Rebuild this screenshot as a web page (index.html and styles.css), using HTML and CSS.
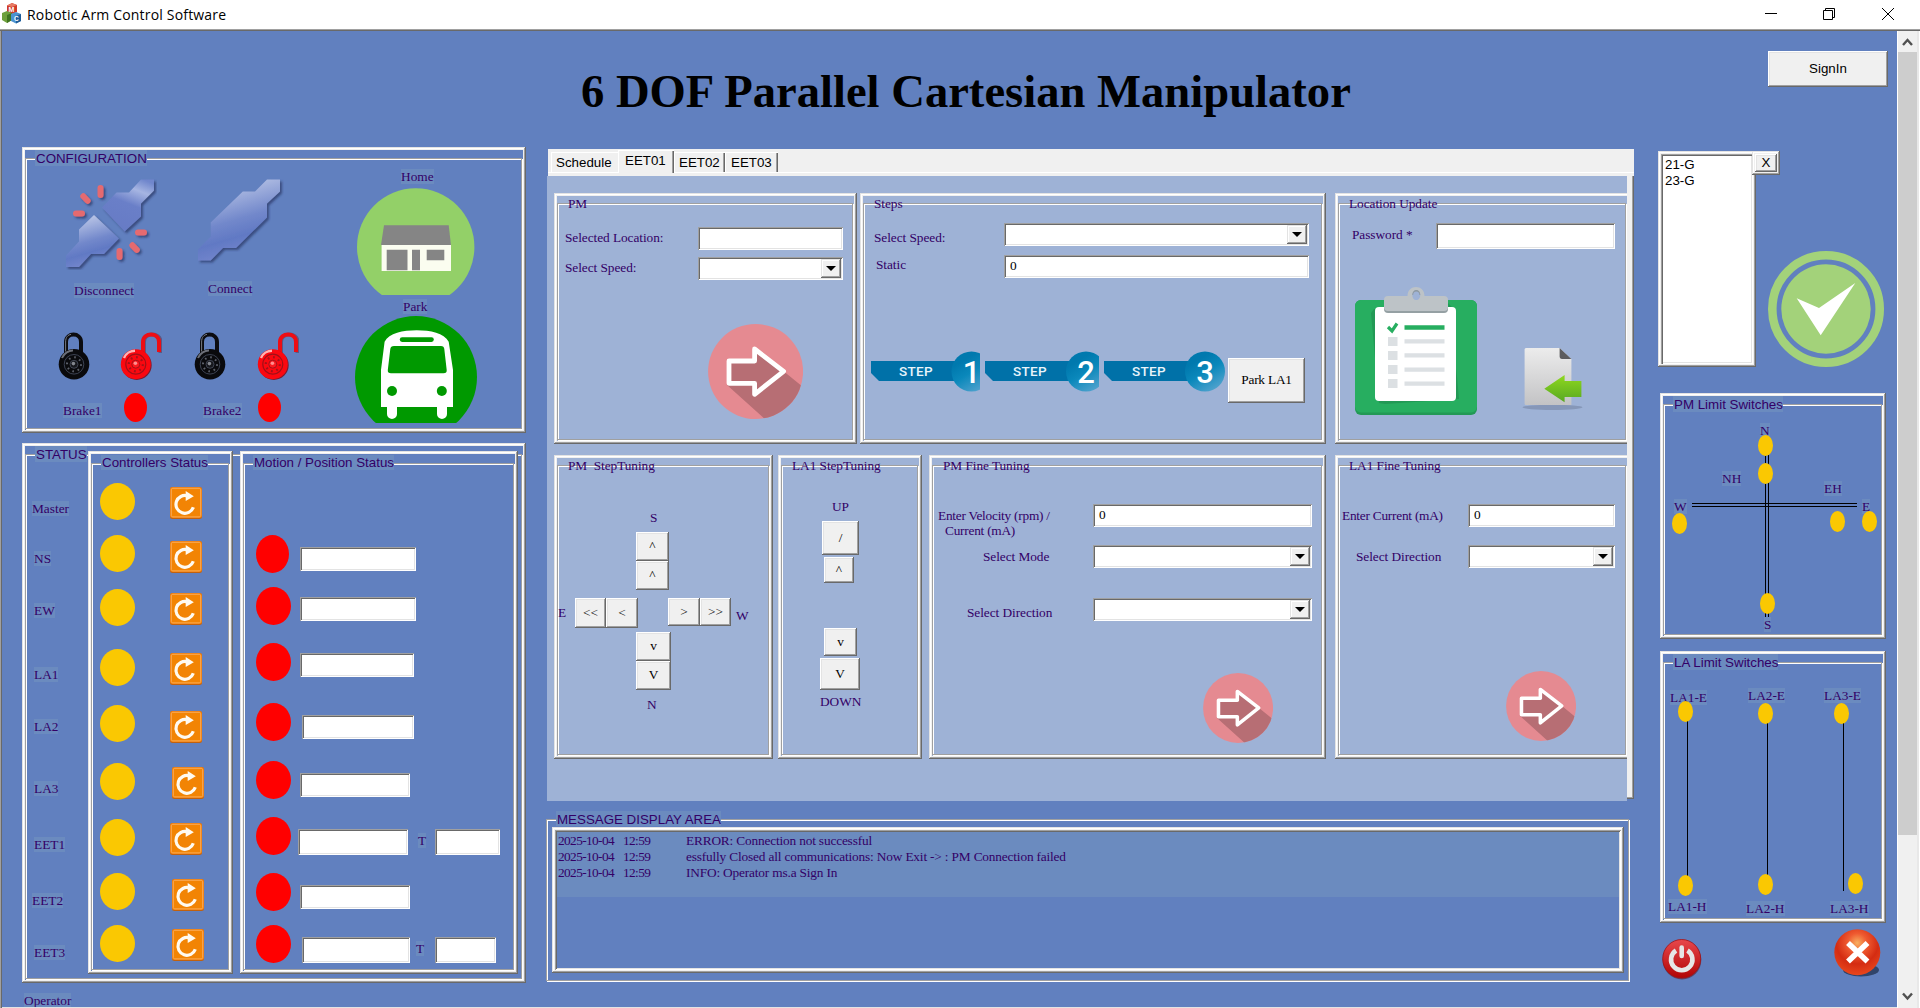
FILE: index.html
```html
<!DOCTYPE html>
<html lang="en">
<head>
<meta charset="utf-8">
<title>Robotic Arm Control Software</title>
<link rel="stylesheet" href="styles.css">
</head>
<body>
<svg class="defs" width="0" height="0">
  <defs>
    <linearGradient id="plug" x1="0.3" y1="0" x2="0.6" y2="1">
      <stop offset="0" stop-color="#c3cdea"/><stop offset="0.5" stop-color="#7288cb"/><stop offset="0.7" stop-color="#6179c4"/><stop offset="1" stop-color="#7b8bd0"/>
    </linearGradient>
    <linearGradient id="plugTop" x1="0.8" y1="0" x2="0.4" y2="1">
      <stop offset="0" stop-color="#6f86cc"/><stop offset="0.22" stop-color="#a6b5e2"/><stop offset="0.5" stop-color="#6a7fc8"/><stop offset="1" stop-color="#667bc5"/>
    </linearGradient>
    <linearGradient id="stepBlue" x1="0" y1="0" x2="0.6" y2="1">
      <stop offset="0.3" stop-color="#0079ae"/><stop offset="0.6" stop-color="#0a88bb"/><stop offset="1" stop-color="#4aa0cc"/>
    </linearGradient>
    <linearGradient id="sheet" x1="0" y1="0" x2="0" y2="1">
      <stop offset="0" stop-color="#ececec"/><stop offset="1" stop-color="#c3c3c5"/>
    </linearGradient>
    <linearGradient id="leaf" x1="0" y1="0" x2="0" y2="1">
      <stop offset="0" stop-color="#8fd81e"/><stop offset="1" stop-color="#58a822"/>
    </linearGradient>
    <linearGradient id="powerRed" x1="0" y1="0" x2="0" y2="1">
      <stop offset="0" stop-color="#e8484c"/><stop offset="1" stop-color="#b10405"/>
    </linearGradient>
    <radialGradient id="closeRed" cx="0.5" cy="0.3" r="0.7">
      <stop offset="0" stop-color="#f8b060"/><stop offset="0.3" stop-color="#ef5a30"/><stop offset="0.65" stop-color="#d42c12"/><stop offset="1" stop-color="#e8461c"/>
    </radialGradient>
    <filter id="soft" x="-20%" y="-20%" width="150%" height="150%">
      <feDropShadow dx="2" dy="2" stdDeviation="1.2" flood-color="#20305f" flood-opacity="0.65"/>
    </filter>
    <clipPath id="disc"><circle cx="47.6" cy="47.5" r="47.5"/></clipPath>
    <symbol id="go" viewBox="0 0 95 95">
      <circle cx="47.6" cy="47.5" r="47.5" fill="#e58a91"/>
      <g clip-path="url(#disc)">
        <path fill="#b76e74" d="M21 37H46.6V25L75.6 47.3 100 67 70 107 19 61Z"/>
      </g>
      <path fill="#e58a91" d="M44 27 46.600 25 46.600 37 21 37 21 35H44Z"/>
      <path fill="none" stroke="#fff" stroke-width="4.8" stroke-linejoin="round" d="M21 37H46.6V25L75.6 47.3 46.6 70.3V59.3H21Z"/>
    </symbol>
    <symbol id="reset" viewBox="0 0 32 32">
      <rect x="0" y="0" width="32" height="32" rx="2.5" fill="#c1610e"/>
      <rect x="0" y="0" width="32" height="31" rx="2.5" fill="#ee7f10"/>
      <rect x="1.3" y="1.3" width="29.4" height="28.6" rx="1.5" fill="#f28404" stroke="#fbab56" stroke-width="1"/>
      <path fill="none" stroke="#fffaf0" stroke-width="3.2" d="M17.6 8.9A8.9 8.9 0 1 0 23.3 20.3"/>
      <path fill="#fffaf0" d="M15.7 4 23.8 9.2 15.7 14Z"/>
    </symbol>
    <symbol id="lock" viewBox="0 0 32 48">
      <path fill="none" stroke="#0c0c10" stroke-width="4" d="M8 24V10C8 0 23 0 23 10V24"/>
      <path fill="none" stroke="#777b85" stroke-width="1" d="M7.6 20V10C7.6 5 10 3 13 2.3"/>
      <circle cx="16" cy="32.3" r="15.3" fill="#0a0a0d"/>
      <path fill="none" stroke="#6c6f78" stroke-width="2" d="M4 26C6 21 11 18.5 15 18.6"/>
      <circle cx="16" cy="32.3" r="9.8" fill="none" stroke="#3c4252" stroke-width="1"/>
      <circle cx="16" cy="32.3" r="7" fill="none" stroke="#5e626c" stroke-width="2" stroke-dasharray="1.6 3.9"/>
      <circle cx="16" cy="32.3" r="4" fill="#17181d" stroke="#3f4452"/><circle cx="15.4" cy="31.6" r="1.8" fill="#858890"/>
    </symbol>
    <symbol id="unlock" viewBox="0 0 42 48">
      <path fill="none" stroke="#58304a" stroke-opacity=".5" stroke-width="4" d="M24 23V10C24 0 40.5 0 40.5 10V21"/>
      <path fill="none" stroke="#ee0d14" stroke-width="4" d="M23 22V10C23 0 39 0 39 10V20"/>
      <circle cx="16.7" cy="33" r="15" fill="#7a1c30"/>
      <circle cx="15.8" cy="32.2" r="15" fill="#fb0810"/>
      <path fill="none" stroke="#ffb3b3" stroke-width="2.4" d="M4 26C6 21 11 18.8 15 18.8"/>
      <circle cx="15.8" cy="32.2" r="10" fill="none" stroke="#a01018" stroke-width="1.2"/>
      <circle cx="15.8" cy="32.2" r="7" fill="none" stroke="#a31218" stroke-width="2.2" stroke-dasharray="1.8 3.7"/>
      <circle cx="15.8" cy="32.2" r="4" fill="#fb1a20" stroke="#a31218"/><circle cx="15.4" cy="31.2" r="1.8" fill="#ff8f90"/>
    </symbol>
  </defs>
</svg>

<div class="window">
  <header class="titlebar">
    <svg class="app-icon" width="19" height="21" viewBox="0 0 19 21">
      <path fill="#cf3a28" d="M5 2.5 10 0l5 2v7l-5 2-5-2Z"/><path fill="#e87b64" d="M5 2.5 10 .3l5 1.8-5 2Z"/>
      <path fill="#6ea03c" d="M0 10 5 8l5 2v7l-5 3-5-3Z"/><path fill="#3f7420" d="M5 12l5-2v7l-5 3Z"/>
      <path fill="#4b92cf" d="M9 11l5-2 5 2v7l-5 2.500-5-2.500Z"/><path fill="#1e5c98" d="M14 13l5-2v7l-5 2.500Z"/>
      <text x="6.500" y="8.500" font-size="7" font-weight="700" fill="#fff" font-family="Liberation Sans, sans-serif">M</text>
      <text x="12" y="18" font-size="6.500" font-weight="700" fill="#fff" font-family="Liberation Sans, sans-serif">C</text>
    </svg>
    <span class="app-name">Robotic Arm Control Software</span>
    <svg class="caption" width="132" height="16" viewBox="0 0 132 16" fill="none" stroke="#000" stroke-width="1">
      <path d="M0 6.500H12"/><path d="M58.500 3.500H67.500V12.500H58.500ZM60.500 3V1.500H69.500V10.500H68"/><path d="M117 1 129 13M129 1 117 13"/>
    </svg>
  </header>

  <div class="client">
    <main class="canvas">
      <div class="head">
        <h1>6 DOF Parallel Cartesian Manipulator</h1>
        <button class="btn signin">SignIn</button>
      </div>

      <div class="columns">
        <section class="col-left">
          <div class="frame config"><div class="group">
            <span class="legend">CONFIGURATION</span>
            <div class="config-body">
              <div class="devices">
                <div class="links">
                  <div class="link-off">
                    <svg width="92" height="92" viewBox="0 0 92 92">
                      <g filter="url(#soft)">
                        <path fill="url(#plugTop)" d="M76 1.500H89V12.500L76 25.500V38.500L59.600 53.500 37 29.500 51.500 14.500H64Z"/>
                        <path fill="url(#plug)" d="M29 37 54 60.500 39 76H26L14 89H1V77.500L14 63.500V51.500Z"/>
                        <g stroke="#e56a70" stroke-width="6" stroke-linecap="round">
                          <path d="M35.500 10V17M18.300 18.300 22.600 22.800M11 35.500H17M73 54.500H79M67.400 67.300 71.800 71.800M54.500 73V79"/>
                        </g>
                      </g>
                    </svg>
                    <span class="lbl">Disconnect</span>
                  </div>
                  <div class="link-on">
                    <svg width="88" height="87" viewBox="0 0 88 87">
                      <path filter="url(#soft)" fill="url(#plug)" d="M70 1.500H83V13.500L70 25.500V39.500L39 70H26L13.700 82.500H1V71.500L13.700 58.500V44.500L45.800 13.500H58Z"/>
                    </svg>
                    <span class="lbl">Connect</span>
                  </div>
                </div>
                <div class="brakes">
                  <div class="brake">
                    <svg width="32" height="48"><use href="#lock"/></svg><svg width="42" height="48"><use href="#unlock"/></svg>
                    <span class="lbl">Brake1</span><i class="dot"></i>
                  </div>
                  <div class="brake second">
                    <svg width="32" height="48"><use href="#lock"/></svg><svg width="42" height="48"><use href="#unlock"/></svg>
                    <span class="lbl">Brake2</span><i class="dot"></i>
                  </div>
                </div>
              </div>
              <div class="places">
                <span class="lbl home-lbl">Home</span>
                <svg class="home" width="118" height="107" viewBox="0 0 118 107">
                  <circle cx="58.700" cy="59" r="58.700" fill="#93d068"/>
                  <path fill="#858585" d="M27 37.300H91.700L94 57H24Z"/><path fill="#fbfdf0" d="M24.600 57H94V83H24.600Z"/>
                  <path fill="#858585" d="M29.700 61.700H50.500V82.300H29.700ZM55 61.700H63V82.300H55ZM69.700 61.700H87.300V72.300H69.700Z"/>
                </svg>
                <span class="lbl park-lbl">Park</span>
                <svg class="park" width="122" height="107" viewBox="0 0 122 107">
                  <circle cx="61" cy="61" r="61" fill="#009900"/>
                  <path fill="#fff" d="M26 91V54L29.600 25.700C34 17 48 14.300 61.700 14.300S89 17 93.700 25.700L98 54V91H92V98A5 5 0 0 1 82 98V91H42V98A5 5 0 0 1 32 98V91Z"/>
                  <rect x="44.800" y="21.300" width="34" height="4.600" rx="2.300" fill="#009900"/>
                  <path fill="#009900" d="M39 30H86Q89 30 89.300 33L91.700 54Q92 57.300 88.500 57.300H36Q32.500 57.300 32.800 54L35.300 33Q35.600 30 39 30Z"/>
                  <circle cx="37" cy="75" r="5" fill="#009900"/><circle cx="86.800" cy="75" r="5" fill="#009900"/>
                </svg>
              </div>
            </div>
          </div></div>

          <div class="frame status"><div class="group status-group">
            <div class="names">
              <span class="legend">STATUS</span>
              <div class="name-list">
                <span class="lbl out">Master</span><span class="lbl">NS</span><span class="lbl">EW</span><span class="lbl">LA1</span><span class="lbl">LA2</span><span class="lbl">LA3</span><span class="lbl">EET1</span><span class="lbl out">EET2</span><span class="lbl">EET3</span>
              </div>
            </div>
            <div class="frame controllers"><div class="group">
              <span class="legend">Controllers Status</span>
              <div class="ctl-body">
                <div class="lamps"><i></i><i></i><i></i><i></i><i></i><i></i><i></i><i></i><i></i></div>
                <div class="resets">
                  <svg><use href="#reset"/></svg><svg><use href="#reset"/></svg><svg><use href="#reset"/></svg><svg><use href="#reset"/></svg><svg><use href="#reset"/></svg><svg class="in"><use href="#reset"/></svg><svg><use href="#reset"/></svg><svg class="in"><use href="#reset"/></svg><svg class="in"><use href="#reset"/></svg>
                </div>
              </div>
            </div></div>
            <div class="frame motion"><div class="group">
              <span class="legend">Motion / Position Status</span>
              <div class="ctl-body">
                <div class="reds"><i class="slim"></i><i></i><i></i><i></i><i></i><i></i><i></i><i></i></div>
                <div class="readouts">
                  <div><b class="field w116"></b></div>
                  <div><b class="field w116"></b></div>
                  <div><b class="field w114"></b></div>
                  <div><b class="field w112"></b></div>
                  <div><b class="field w110"></b></div>
                  <div class="eet1"><b class="field w110 tall"></b><span class="lbl">T</span><b class="field tall w64"></b></div>
                  <div><b class="field w110"></b></div>
                  <div class="eet3"><b class="field w108 tall"></b><span class="lbl">T</span><b class="field tall w60"></b></div>
                </div>
              </div>
            </div></div>
          </div></div>
          <span class="lbl operator">Operator</span>
        </section>

        <section class="col-mid">
          <div class="tabs">
            <nav class="tabstrip">
              <span class="tab t1">Schedule</span><span class="tab t2 on">EET01</span><span class="tab t3">EET02</span><span class="tab t4">EET03</span>
            </nav>
            <div class="tabwrap">
              <div class="page">
                <div class="prow top">
                  <div class="frame pm"><div class="group">
                    <span class="cap">PM</span>
                    <div class="form">
                      <label>Selected Location:</label><b class="field"></b>
                      <label>Select Speed:</label><b class="field combo"><i></i></b>
                    </div>
                    <svg class="go" width="95" height="95"><use href="#go"/></svg>
                  </div></div>
                  <div class="frame steps"><div class="group">
                    <span class="cap">Steps</span>
                    <div class="form">
                      <label class="l1">Select Speed:</label><b class="field combo"><i></i></b>
                      <label class="l2">Static</label><b class="field">0</b>
                    </div>
                    <div class="badges">
                      <svg width="109" height="41" viewBox="0 0 109 41"><path fill="#0071a8" d="M0 10H90V30H8L0 22Z"/><circle cx="100.500" cy="20.500" r="20" fill="url(#stepBlue)"/><text class="st" x="28" y="25">STEP</text><text class="num" x="100.500" y="32">1</text></svg>
                      <svg width="114" height="41" viewBox="0 0 114 41"><path fill="#0071a8" d="M0 10H90V30H8L0 22Z"/><circle cx="101" cy="20.500" r="20" fill="url(#stepBlue)"/><text class="st" x="28" y="25">STEP</text><text class="num" x="101" y="32">2</text></svg>
                      <svg width="121" height="41" viewBox="0 0 121 41"><path fill="#0071a8" d="M0 10H90V30H8L0 22Z"/><circle cx="101" cy="20.500" r="20" fill="url(#stepBlue)"/><text class="st" x="28" y="25">STEP</text><text class="num" x="101" y="32">3</text></svg>
                      <button class="btn serif park-la">Park LA1</button>
                    </div>
                  </div></div>
                  <div class="frame loc"><div class="group">
                    <span class="cap">Location Update</span>
                    <div class="form"><label>Password *</label><b class="field"></b></div>
                    <div class="docs">
                      <svg width="123" height="128" viewBox="0 0 123 128">
                        <rect y="13" width="122" height="115" rx="6" fill="#229955"/><rect y="13" width="122" height="112.500" rx="6" fill="#27ae60"/>
                        <path fill="#229955" d="M19 22 16 26 24 116 30 117 104 112 102 90 93 16 97 20Z"/>
                        <rect x="20" y="20" width="81" height="94" rx="4" fill="#fff"/>
                        <path fill="#95a0a3" d="M29 12H93V22Q93 26 89 26H33Q29 26 29 22Z"/>
                        <path fill="#bdc3c7" fill-rule="evenodd" d="M33 9H52.500C52.500 -3 69.500 -3 69.500 9H89Q93 9 93 13V20Q93 24 89 24H33Q29 24 29 20V13Q29 9 33 9Z"/>
                        <ellipse cx="61.300" cy="8" rx="4" ry="5" fill="#9eb2d6"/><path d="M57.300 8a4 5 0 0 1 8 0z" fill="#8e989e"/><ellipse cx="61.300" cy="8.800" rx="3.200" ry="4.200" fill="#9eb2d6"/>
                        <path fill="none" stroke="#27ae60" stroke-width="3.200" d="M33 40 37 44 42 36.500"/>
                        <path fill="#27ae60" d="M49.500 38.300H89.500V42.800H49.500Z"/>
                        <path fill="#dce0e3" d="M33 50H42.500V59H33ZM33 64H42.500V73H33ZM33 78H42.500V87H33ZM33 92H42.500V101H33ZM49.500 52.300H89.500V56.500H49.500ZM49.500 66.300H89.500V70.500H49.500ZM49.500 80.500H89.500V84.700H49.500ZM49.500 94.600H89.500V98.800H49.500Z"/>
                      </svg>
                      <svg class="sheet" width="61" height="63" viewBox="0 0 61 63">
                        <ellipse cx="30.500" cy="60.300" rx="30" ry="2.600" fill="#8090b0" opacity=".8"/>
                        <path fill="url(#sheet)" d="M4 1H37.600L49.400 12V58H4Q2.600 58 2.600 56.500V2.500Q2.600 1 4 1Z"/>
                        <path fill="#5c5c5e" d="M37.600 1 49.400 12H40Q37.600 12 37.600 9Z"/>
                        <path fill="url(#leaf)" d="M22.300 41.700 42.600 28V34H59.400V50H42.600V55.300Z"/>
                      </svg>
                    </div>
                  </div></div>
                </div>

                <div class="prow bottom">
                  <div class="frame pmstep"><div class="group">
                    <span class="cap">PM&nbsp; StepTuning</span>
                    <span class="txt s">S</span>
                    <div class="stack up"><button class="btn serif">^</button><button class="btn serif">^</button></div>
                    <div class="mid">
                      <span class="txt e">E</span><button class="btn serif w31">&lt;&lt;</button><button class="btn serif w32">&lt;</button>
                      <button class="btn serif r w32 first">&gt;</button><button class="btn serif r w31">&gt;&gt;</button><span class="txt w">W</span>
                    </div>
                    <div class="stack down"><button class="btn serif">v</button><button class="btn serif">V</button></div>
                    <span class="txt n">N</span>
                  </div></div>
                  <div class="frame lastep"><div class="group">
                    <span class="cap">LA1 StepTuning</span>
                    <span class="txt u">UP</span>
                    <button class="btn serif b1">/</button><button class="btn serif b2">^</button><button class="btn serif b3">v</button><button class="btn serif b4">V</button>
                    <span class="txt d">DOWN</span>
                  </div></div>
                  <div class="frame pmfine"><div class="group">
                    <span class="cap">PM Fine Tuning</span>
                    <div class="form">
                      <label class="l1">Enter Velocity (rpm) /<br><span class="ind">Current (mA)</span></label><b class="field">0</b>
                      <label class="l2">Select Mode</label><b class="field combo"><i></i></b>
                      <label class="l3">Select Direction</label><b class="field combo"><i></i></b>
                    </div>
                    <svg class="go" width="70" height="70"><use href="#go"/></svg>
                  </div></div>
                  <div class="frame lafine"><div class="group">
                    <span class="cap">LA1 Fine Tuning</span>
                    <div class="form">
                      <label class="l1">Enter Current (mA)</label><b class="field">0</b>
                      <label class="l2">Select Direction</label><b class="field combo"><i></i></b>
                    </div>
                    <svg class="go" width="70" height="70"><use href="#go"/></svg>
                  </div></div>
                </div>
              </div>
              <div class="tabedge"></div>
            </div>
          </div>

          <div class="group messages">
            <span class="legend">MESSAGE DISPLAY AREA</span>
            <div class="frame log"><div class="loglist">
              <div><span>2025-10-04</span><span>12:59</span><span>ERROR: Connection not successful</span></div>
              <div><span>2025-10-04</span><span>12:59</span><span>essfully Closed all communications: Now Exit -&gt; : PM Connection failed</span></div>
              <div><span>2025-10-04</span><span>12:59</span><span>INFO: Operator ms.a Sign In</span></div>
            </div></div>
          </div>
        </section>

        <section class="col-right">
          <div class="pick">
            <div class="frame listframe"><div class="list"><span>21-G</span><span>23-G</span></div></div>
            <div class="pick-side">
              <div class="frame xframe"><button class="btn">X</button></div>
              <svg class="ok" width="116" height="116" viewBox="0 0 116 116">
                <circle cx="58" cy="58" r="53.700" fill="none" stroke="#a3d27a" stroke-width="8.600"/><circle cx="58" cy="58" r="44.700" fill="#a3d27a"/>
                <path fill="#fff" d="M28.700 47.300 51 57 87.300 32 52.700 84.300Z"/>
              </svg>
            </div>
          </div>

          <div class="frame pmlimit"><div class="group">
            <span class="legend">PM Limit Switches</span>
            <div class="plot pmplot">
              <svg width="218" height="222" stroke="#000" stroke-width="1"><path d="M28 91.500H193M28 94.500H193M101.500 43V205M104.500 43V205"/></svg>
              <span class="lbl p-n">N</span><span class="lbl p-nh">NH</span><span class="lbl p-eh">EH</span><span class="lbl p-w">W</span><span class="lbl p-e">E</span><span class="lbl p-s">S</span>
              <i class="d-n"></i><i class="d-nh"></i><i class="d-w"></i><i class="d-eh"></i><i class="d-e"></i><i class="d-s"></i>
            </div>
          </div></div>

          <div class="frame lalimit"><div class="group">
            <span class="legend">LA Limit Switches</span>
            <div class="plot laplot">
              <svg width="218" height="248" stroke="#000" stroke-width="1"><path d="M23.500 40V206M103.500 40V206M179.500 40V221"/></svg>
              <span class="lbl q1">LA1-E</span><span class="lbl q2">LA2-E</span><span class="lbl q3">LA3-E</span>
              <span class="lbl q4">LA1-H</span><span class="lbl q5">LA2-H</span><span class="lbl q6">LA3-H</span>
              <i class="e1"></i><i class="e2"></i><i class="e3"></i><i class="h1"></i><i class="h2"></i><i class="h3"></i>
            </div>
          </div></div>

          <div class="power-row">
            <svg class="power" width="40" height="41" viewBox="0 0 40 41">
              <ellipse cx="20" cy="21" rx="19.300" ry="19.600" fill="#5a2030" opacity=".6"/>
              <ellipse cx="19.700" cy="19.800" rx="19" ry="19.300" fill="url(#powerRed)" stroke="#a01015" stroke-width=".8"/>
              <path fill="none" stroke="#e6e6e6" stroke-width="4.600" d="M14 11.500A10.700 10.700 0 1 0 25.500 11.500"/><path fill="none" stroke="#e6e6e6" stroke-width="4.600" stroke-linecap="round" d="M19.700 8.500V17"/>
            </svg>
            <svg class="close" width="50" height="50" viewBox="0 0 50 50">
              <ellipse cx="27" cy="41" rx="18" ry="6.500" fill="#20304f" opacity=".75"/>
              <circle cx="23.300" cy="23.200" r="23" fill="url(#closeRed)"/>
              <path stroke="#fff" stroke-width="5.600" d="M14 14 33.500 32.500M33.500 14 14 32.500"/>
            </svg>
          </div>
        </section>
      </div>
    </main>
    <aside class="scroll">
      <svg width="19" height="21"><path d="M5 14 9.500 9 14 14" fill="none" stroke="#505050" stroke-width="2.400"/></svg>
      <div class="thumb"></div>
      <svg class="scroll-end" width="19" height="21"><path d="M5 6.500 9.500 11.500 14 6.500" fill="none" stroke="#505050" stroke-width="2.400"/></svg>
    </aside>
  </div>
</div>
</body>
</html>
```
FILE: styles.css
```css
* { box-sizing: border-box; }
body { margin: 0; width: 1920px; height: 1008px; overflow: hidden; background: #fff; --main: #6180bf; --ink: #330066; }
svg { display: block; flex: none; }
.defs { position: absolute; }
i { display: block; flex: none; }

.window { width: 1920px; height: 1008px; display: flex; flex-direction: column; font: 13.33px/15px "Liberation Serif", serif; color: var(--ink); }

/* title bar */
.titlebar { height: 29px; flex: none; display: flex; align-items: flex-start; background: #fff; color: #000; }
.app-icon { margin: 3px 0 0 2px; }
.app-name { font: 14px/18px "Open Sans", sans-serif; margin: 6px 0 0 6px; letter-spacing: 0.18px; white-space: nowrap; }
.caption { margin: 7px 17px 0 auto; width: 138px; overflow: visible; }
.caption { width: 132px; margin-right: 23px; }

.client { flex: 1; min-height: 0; display: flex; border-top: 1px solid #a0a0a0; box-shadow: inset 0 1px 0 #696969, inset 1px 0 0 #a0a0a0, inset 2px 0 0 #696969; padding: 1px 0 0 2px; }
.canvas { width: 1895px; background: var(--main); overflow: hidden; border-bottom: 1px solid #e3e3e3; }

.scroll { width: 23px; background: #f0f0f0; border-left: 1px solid #fff; box-shadow: inset -1px 0 0 #fff, inset -3px 0 0 #e8e8e8; display: flex; flex-direction: column; }
.thumb { width: 19px; height: 783px; background: #cdcdcd; }
.scroll-end { margin-top: auto; }

/* header row */
.head { height: 116px; display: flex; align-items: flex-start; }
h1 { font: bold 46.62px/54px "Liberation Serif", serif; color: #000; margin: 33px 0 0 579px; white-space: nowrap; }
.btn { flex: none; background: #f0f0f0; border: 0; padding: 0 0 2px; color: #000; font: 13.33px/15px "Liberation Sans", sans-serif; box-shadow: inset -1px -1px 0 #696969, inset 1px 1px 0 #fff, inset -2px -2px 0 #a0a0a0, inset 2px 2px 0 #e3e3e3; }
.btn.serif { font-family: "Liberation Serif", serif; }
.signin { width: 120px; height: 36px; margin: 20px 9px 0 auto; }

.columns { display: flex; align-items: flex-start; padding-left: 20px; }
.col-left { width: 504px; flex: none; }
.col-mid { width: 1087px; flex: none; margin: 2px 0 0 21px; }
.col-right { width: 230px; flex: none; margin: 4px 0 0 21px; }

/* dialog frames and etched groups */
.frame { flex: none; display: flex; flex-direction: column; padding: 11px 4px 4px 3px; background: var(--main);
  box-shadow: inset -1px -1px 0 #696969, inset 1px 1px 0 #e3e3e3, inset -2px -2px 0 #a0a0a0, inset 2px 2px 0 #fff, inset 0 0 0 3px #f0f0f0; }
.group { flex: 1; min-height: 0; border: 1px solid #a0a0a0; box-shadow: inset 1px 1px 0 #fff, 1px 1px 0 #fff; }
.legend { display: block; width: fit-content; height: 16px; margin: -9px 0 0 9px; padding-left: 1px; font: 13.33px/17px "Liberation Sans", sans-serif; background: #6b8bbf; white-space: nowrap; }
.lbl { display: block; width: fit-content; height: 15px; background: #6b8bbf; white-space: nowrap; }

.field { display: block; flex: none; height: 23px; background: #fff; color: #000; font-weight: 400; line-height: 15px; padding: 3px 6px;
  box-shadow: inset 1px 1px 0 #a0a0a0, inset -1px -1px 0 #fff, inset 2px 2px 0 #696969, inset -2px -2px 0 #e3e3e3; }
.combo { padding: 2px; }
.combo i { width: 20px; height: 19px; margin-left: auto; background: #f0f0f0; box-shadow: inset -1px -1px 0 #696969, inset 1px 1px 0 #e3e3e3, inset -2px -2px 0 #a0a0a0, inset 2px 2px 0 #fff; padding: 7px 0 0 5px; }
.combo i::before { content: ""; display: block; width: 0; border: 5px solid transparent; border-top-color: #000; border-bottom: 0; }

/* configuration */
.config { height: 286px; }
.config-body { display: flex; }
.devices { width: 329px; }
.links { display: flex; align-items: flex-start; margin: 12px 0 0 39px; height: 120px; }
.link-off .lbl { margin: 13px 0 0 9px; }
.link-on { margin-left: 40px; }
.link-on .lbl { margin: 16px 0 0 11px; }
.brakes { display: flex; margin: 34px 0 0 32px; }
.brake { width: 136px; display: grid; grid-template-columns: 62px 42px; grid-template-rows: 61px 30px; }
.brake .lbl { margin: 10px 0 0 5px; }
.brake.second { grid-template-columns: 63px 42px; }
.brake.second .lbl { margin-left: 9px; }
.dot { width: 23px; height: 29px; border-radius: 50%; background: #f00; margin-left: 4px; }
.second .dot { margin-left: 1px; }
.home-lbl { margin: 3px 0 0 46px; }
.home { margin: 4px 0 0 2px; }
.park-lbl { margin: 4px 0 0 48px; }
.park { margin-top: 2px; }

/* status */
.status { height: 540px; margin-top: 10px; }
.status-group { display: flex; align-items: flex-start; }
.names { width: 62px; flex: none; }
.name-list { padding: 39px 0 0 8px; display: grid; grid-template-rows: 50px 52px 64px 52px 62px 56px 56px 52px 15px; }
.name-list .out { margin-left: -2px; }
.controllers, .motion { height: 523px; margin-top: -4px; padding-top: 12px; }
.controllers { width: 145px; }
.motion { width: 278px; margin-left: 7px; }
.controllers .legend, .motion .legend { height: 15px; line-height: 16px; }
.ctl-body { display: flex; align-items: flex-start; }
.lamps, .reds, .resets, .readouts { display: grid; align-items: start; flex: none; }
.lamps { margin: 13px 0 0 8px; grid-template-rows: 52px 54px 60px 56px 58px 56px 54px 52px 38px; }
.lamps i, .reds i { width: 35px; height: 37px; border-radius: 50%; background: #fac802; }
.resets { margin: 17px 0 0 35px; grid-template-rows: 54px 52px 60px 58px 56px 56px 56px 50px 32px; }
.resets svg { width: 32px; height: 32px; }
.resets .in { margin-left: 2px; }
.reds { margin: 65px 0 0 12px; grid-template-rows: 52px 56px 60px 58px 56px 56px 52px 38px; }
.reds i { background: #f00; height: 38px; }
.reds .slim { width: 33px; }
.readouts { margin: 77px 0 0 9px; grid-template-rows: 50px 56px 62px 58px 56px 56px 52px 26px; }
.readouts > div { display: flex; align-items: flex-start; }
.readouts .field { height: 24px; }
.readouts .tall { height: 26px; }
.w116 { width: 116px; } .w114 { width: 114px; } .w112 { width: 112px; margin-left: 2px; } .w110 { width: 110px; } .w108 { width: 108px; margin-left: 2px; } .w64 { width: 65px; } .w60 { width: 61px; }
.eet1 { margin-left: -2px; }
.eet1 .lbl { margin: 4px 9px 0 10px; }
.eet3 .lbl { margin: 4px 11px 0 6px; }
.operator { margin: 10px 0 0 2px; }

/* tab control */
.tabs { height: 652px; --main: #9eb2d6; letter-spacing: -0.06px; }
.tabstrip { height: 27px; display: flex; align-items: flex-end; margin-left: 1px; padding: 0 0 4px 3px; background: #f0f0f0; color: #000; font: 13.33px/15px "Liberation Sans", sans-serif; letter-spacing: 0; box-shadow: inset 0 -3px 0 #f0f0f0, inset 0 -4px 0 #fff; }
.tab { height: 20px; padding-top: 3px; white-space: nowrap; background: #f0f0f0; box-shadow: inset 1px 1px 0 #fff, inset -1px 0 0 #696969, inset -2px 0 0 #a0a0a0; }
.t1 { width: 67px; padding-left: 5px; box-shadow: inset 1px 1px 0 #fff; }
.t2 { width: 56px; padding-left: 7px; }
.t3 { width: 51px; padding-left: 5px; }
.t4 { width: 53px; padding-left: 6px; }
.tab.on { height: 23px; padding-top: 3px; margin-bottom: -1px; }
.tabwrap { display: flex; height: 625px; }
.page { width: 1080px; flex: none; background: var(--main); overflow: hidden; padding: 17px 0 0 7px; }
.tabedge { width: 7px; height: 623px; background: #f0f0f0; box-shadow: inset -1px -1px 0 #696969, inset -2px -2px 0 #a0a0a0; }
.prow { display: flex; }
.prow .frame { padding-top: 10px; }
.top { height: 251px; }
.bottom { height: 304px; margin-top: 11px; }
.cap { display: block; height: 15px; margin: -8px 0 0 10px; white-space: pre; }
.form { display: grid; justify-content: start; align-items: start; white-space: nowrap; }
.pm { width: 303px; }
.pm .form { margin: 16px 0 0 7px; grid-template-columns: 133px 145px; row-gap: 7px; }
.pm label { margin-top: 3px; }
.pm .go { margin: 44px 0 0 150px; }
.steps { width: 466px; margin-left: 3px; }
.steps .form { margin: 12px 0 0 10px; grid-template-columns: 130px 305px; row-gap: 9px; }
.steps .l2 { margin: 2px 0 0 2px; }
.badges { display: flex; margin: 73px 0 0 7px; gap: 5px; }
.st { font: 500 13.5px Roboto, sans-serif; fill: #e8f4fb; letter-spacing: 0.3px; }
.num { font: 500 31px Roboto, sans-serif; fill: #fff; text-anchor: middle; }
.park-la { width: 77px; height: 45px; margin: 7px 0 0 -2px; letter-spacing: -0.2px; }
.loc, .lafine { width: 295px; margin-left: 9px; }
.loc .form { margin: 12px 0 0 13px; grid-template-columns: 84px 179px; }
.loc .form label { margin-top: 4px; }
.loc .field { height: 26px; }
.docs { display: flex; margin: 38px 0 0 16px; }
.sheet { margin: 60px 0 0 44px; }

.txt { display: block; height: 15px; }
.pmstep { width: 219px; }
.s { margin: 37px 0 0 92px; }
.stack { display: flex; flex-direction: column; }
.stack .btn { height: 29px; }
.up { width: 33px; margin: 7px 0 0 78px; }
.mid { display: flex; align-items: flex-start; height: 30px; margin-top: 8px; }
.mid .btn { height: 30px; }
.mid .r { height: 28px; }
.w31 { width: 31px; } .w32 { width: 32px; }
.first { margin-left: 30px; }
.e { width: 17px; margin-top: 7px; }
.w { margin: 10px 0 0 5px; }
.down { width: 35px; margin: 4px 0 0 78px; }
.n { margin: 7px 0 0 89px; }
.lastep { width: 144px; margin-left: 5px; }
.lastep .btn { display: block; }
.u { margin: 26px 0 0 50px; }
.b1 { width: 37px; height: 34px; margin: 7px 0 0 40px; }
.b2 { width: 30px; height: 26px; margin: 2px 0 0 42px; }
.b3 { width: 33px; height: 28px; margin: 45px 0 0 42px; }
.b4 { width: 40px; height: 32px; margin: 2px 0 0 38px; }
.d { margin: 4px 0 0 38px; }
.pmfine { width: 397px; margin-left: 7px; }
.pmfine .form { margin: 31px 0 0 5px; grid-template-columns: 155px 219px; grid-template-rows: 41px 53px 23px; }
.form .l1 { margin-top: 4px; }
.steps .form .l1 { margin-top: 7px; }
.pmfine .l1, .lafine .l1 { letter-spacing: -0.24px; }
.ind { margin-left: 7px; }
.pmfine .l2 { margin: 4px 0 0 45px; }
.pmfine .l3 { margin: 7px 0 0 29px; }
.pmfine .go { margin: 52px 0 0 270px; }
.lafine .form { margin: 31px 0 0 3px; grid-template-columns: 126px 147px; grid-template-rows: 41px 23px; }
.lafine .l2 { margin: 4px 0 0 14px; }
.lafine .go { margin: 103px 0 0 167px; }

/* messages */
.messages { width: 1083px; height: 162px; margin: 18px 0 0 -1px; }
.messages .legend { height: 15px; }
.log { width: 1072px; height: 146px; margin: 1px 0 0 5px; padding: 3px; }
.loglist { flex: 1; box-shadow: inset 1px 1px 0 #a0a0a0, inset -1px -1px 0 #fff, inset 2px 2px 0 #696969, inset -2px -2px 0 #e3e3e3;
  padding: 2px; background: linear-gradient(#6b8bbf, #6b8bbf) 2px 2px / calc(100% - 4px) 65px no-repeat; }
.loglist div { display: grid; grid-template-columns: 65px 63px auto; height: 16px; line-height: 18px; padding-left: 1px; white-space: nowrap; letter-spacing: -0.62px; }
.loglist span:last-child { letter-spacing: -0.17px; }

/* right column */
.pick { display: flex; align-items: flex-start; padding-left: 3px; }
.listframe { width: 98px; height: 216px; padding: 3px; }
.list { flex: 1; background: #fff; color: #000; font: 13.33px/16px "Liberation Sans", sans-serif; display: flex; flex-direction: column; padding: 3px 4px;
  box-shadow: inset 1px 1px 0 #a0a0a0, inset 2px 2px 0 #696969, inset -1px -1px 0 #fff, inset -2px -2px 0 #e3e3e3; }
.pick-side { margin-left: -4px; }
.xframe { width: 28px; height: 24px; padding: 3px; background: #f0f0f0; }
.xframe .btn { flex: 1; }
.ok { margin: 76px 0 0 16px; }
.pmlimit { width: 226px; height: 246px; margin: 26px 0 0 5px; }
.lalimit { width: 226px; height: 272px; margin: 12px 0 0 5px; }
.plot { position: relative; height: 0; }
.plot .lbl, .plot i { position: absolute; }
.plot i { width: 15px; height: 21px; border-radius: 50%; background: #fac802; }
.p-n { left: 96px; top: 11px; } .p-nh { left: 58px; top: 59px; } .p-eh { left: 160px; top: 69px; } .p-w { left: 10px; top: 87px; } .p-e { left: 198px; top: 87px; } .p-s { left: 100px; top: 205px; }
.d-n { left: 94px; top: 23px; } .d-nh { left: 94px; top: 51px; } .d-w { left: 8px; top: 101px; } .d-eh { left: 166px; top: 99px; } .d-e { left: 198px; top: 99px; } .d-s { left: 96px; top: 181px; }
.q1 { left: 6px; top: 20px; } .q2 { left: 84px; top: 18px; } .q3 { left: 160px; top: 18px; } .q4 { left: 4px; top: 229px; } .q5 { left: 82px; top: 231px; } .q6 { left: 166px; top: 231px; }
.e1 { left: 14px; top: 31px; } .e2 { left: 94px; top: 33px; } .e3 { left: 170px; top: 33px; } .h1 { left: 14px; top: 205px; } .h2 { left: 94px; top: 204px; } .h3 { left: 184px; top: 203px; }
.power-row { display: flex; align-items: flex-start; margin-top: 6px; }
.power { margin: 10px 0 0 7px; }
.close { margin-left: 132px; }
```
